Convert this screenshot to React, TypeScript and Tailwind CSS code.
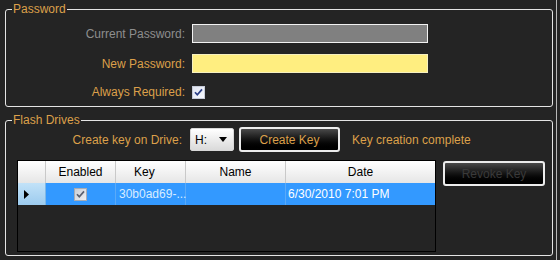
const FONT = { fontFamily: '"Liberation Sans", Arial, sans-serif' };

function Check({ muted = false }: { muted?: boolean }) {
  return (
    <svg width="13" height="13" viewBox="0 0 13 13" className="block">
      <defs>
        <linearGradient id={muted ? "cbm" : "cb"} x1="0" y1="0" x2="1" y2="1">
          <stop offset="0" stopColor={muted ? "#c8ccd4" : "#dfe4f0"} />
          <stop offset="1" stopColor={muted ? "#eef0f4" : "#f8faff"} />
        </linearGradient>
      </defs>
      <rect x="0.5" y="0.5" width="12" height="12" fill={`url(#${muted ? "cbm" : "cb"})`} stroke={muted ? "#a8acb4" : "#c6cbd8"} />
      <path d="M3 6.2 L5.3 8.8 L10 3.4" fill="none" stroke={muted ? "#5a6070" : "#2b3f86"} strokeWidth="1.7" />
    </svg>
  );
}

function GlossButton({ label, disabled, className }: { label: string; disabled?: boolean; className: string }) {
  return (
    <div
      className={`flex items-center justify-center rounded-[3px] border-2 border-[#ececec] bg-gradient-to-b from-[#4a4a4a] via-[#141414] to-black text-[12px] ${
        disabled ? "text-[#3a3a3a]" : "text-[#dca04a]"
      } ${className}`}
    >
      {label}
    </div>
  );
}

function Legend({ children }: { children: string }) {
  return <legend className="ml-[6px] px-[1px] text-[12px] leading-[14px] text-[#dca04a]">{children}</legend>;
}

export default function App() {
  return (
    <div className="flex h-[260px] w-[560px] overflow-hidden bg-[#242424]" style={FONT}>
      <div className="w-[556px] pl-[5px] pr-[3px] pt-[2px]">
        {/* Password */}
        <fieldset className="h-[105px] rounded-[3px] border border-[#e4e4e4]">
          <Legend>Password</Legend>
          <div className="grid grid-cols-[179px_236px] items-center gap-x-[7px] pt-[8px] text-[12px]">
            <span className="text-right text-[#8e8e8e]">Current Password:</span>
            <div className="h-[19px] border border-[#f2f2f2] bg-[#808080]" />
            <span className="mt-[11px] text-right text-[#dca04a]">New Password:</span>
            <div className="mt-[11px] h-[19px] border border-[#f6f0c0] bg-[#ffee80]" />
            <span className="mt-[10px] text-right text-[#dca04a]">Always Required:</span>
            <div className="mt-[10px]">
              <Check />
            </div>
          </div>
        </fieldset>

        {/* Flash Drives */}
        <fieldset className="mt-[6px] h-[143px] rounded-[3px] border border-[#e4e4e4]">
          <Legend>Flash Drives</Legend>
          <div className="flex h-[25px] items-center text-[12px]">
            <span className="w-[176px] text-right text-[#dca04a]">Create key on Drive:</span>
            <div className="ml-[8px] flex h-[23px] w-[44px] items-center justify-between rounded-[2px] border border-[#d8d8d8] bg-gradient-to-b from-white to-[#dadada] pl-[4px] pr-[6px] text-black">
              <span>H:</span>
              <svg width="8" height="5" viewBox="0 0 8 5">
                <path d="M0 0 H8 L4 5 Z" fill="#000" />
              </svg>
            </div>
            <GlossButton label="Create Key" className="ml-[5px] h-[25px] w-[101px]" />
            <span className="ml-[12px] text-[#dca04a]">Key creation complete</span>
          </div>

          <div className="mt-[8px] flex items-start pl-[11px]">
            <div className="h-[92px] w-[419px] border border-black bg-[#242424] text-[12px]">
              <div className="grid h-[22px] grid-cols-[28px_70px_70px_100px_1fr] bg-gradient-to-b from-white to-[#e6e6e6] text-black">
                <div className="border-r border-[#c9c9c9]" />
                <div className="flex items-center justify-center border-r border-[#c9c9c9]">Enabled</div>
                <div className="flex items-center border-r border-[#c9c9c9] pl-[18px]">Key</div>
                <div className="flex items-center justify-center border-r border-[#c9c9c9]">Name</div>
                <div className="flex items-center justify-center">Date</div>
              </div>
              <div className="grid h-[22px] grid-cols-[28px_70px_70px_100px_1fr] text-white">
                <div className="flex items-center border-r border-[#7fb8e6] bg-gradient-to-b from-[#c2e2f8] to-[#9ccbee] pl-[6px]">
                  <svg width="5" height="9" viewBox="0 0 5 9">
                    <path d="M0 0 L5 4.5 L0 9 Z" fill="#000" />
                  </svg>
                </div>
                <div className="flex items-center justify-center border-r border-[#5aaaf8] bg-[#3399ff]">
                  <Check muted />
                </div>
                <div className="flex items-center border-r border-[#5aaaf8] bg-[#3399ff] pl-[3px] text-[#d8ecff]">30b0ad69-...</div>
                <div className="border-r border-[#5aaaf8] bg-[#3399ff]" />
                <div className="flex items-center bg-[#3399ff] pl-[2px]">6/30/2010 7:01 PM</div>
              </div>
            </div>
            <GlossButton label="Revoke Key" disabled className="ml-[7px] mt-[1px] h-[25px] w-[102px]" />
          </div>
        </fieldset>
      </div>
      <div className="h-full w-px bg-[#b8b8b8]" />
    </div>
  );
}
